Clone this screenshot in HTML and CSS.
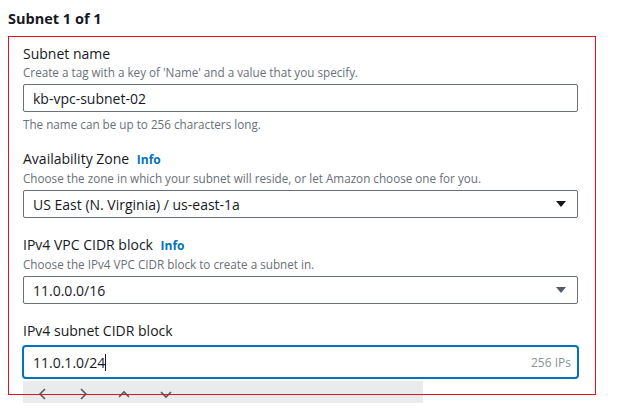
FILE: index.html
```html
<!DOCTYPE html>
<html lang="en">
<head>
<meta charset="utf-8">
<title>Subnet settings</title>
<link rel="stylesheet" href="styles.css">
</head>
<body>
<h2 class="title">Subnet 1 of 1</h2>
<section class="subnet-box">
  <div class="field">
    <div class="label">Subnet name</div>
    <div class="desc">Create a tag with a key of 'Name' and a value that you specify.</div>
    <div class="control input">kb-vpc-subnet-02</div>
    <div class="desc constraint">The name can be up to 256 characters long.</div>
  </div>
  <div class="field">
    <div class="label">Availability Zone <span class="info">Info</span></div>
    <div class="desc">Choose the zone in which your subnet will reside, or let Amazon choose one for you.</div>
    <div class="control select"><span>US East (N. Virginia) / us-east-1a</span><span class="caret"></span></div>
  </div>
  <div class="field">
    <div class="label">IPv4 VPC CIDR block <span class="info">Info</span></div>
    <div class="desc">Choose the IPv4 VPC CIDR block to create a subnet in.</div>
    <div class="control select"><span>11.0.0.0/16</span><span class="caret caret-muted"></span></div>
  </div>
  <div class="field">
    <div class="label">IPv4 subnet CIDR block</div>
    <div class="control input focused"><span>11.0.1.0/24<span class="cursor"></span></span><span class="count">256 IPs</span></div>
  </div>
  <div class="toolbar">
    <svg class="tb-icon" width="10" height="14" viewBox="0 0 10 14"><path d="M7 2 L2 7 L7 12" fill="none" stroke="#545b64" stroke-width="1.6"/></svg>
    <svg class="tb-icon" width="10" height="14" viewBox="0 0 10 14"><path d="M3 2 L8 7 L3 12" fill="none" stroke="#545b64" stroke-width="1.6"/></svg>
    <svg class="tb-icon" width="12" height="14" viewBox="0 0 12 14"><path d="M1 10 L6 5 L11 10" fill="none" stroke="#545b64" stroke-width="1.6"/></svg>
    <svg class="tb-icon" width="12" height="14" viewBox="0 0 12 14"><path d="M1 5 L6 10 L11 5" fill="none" stroke="#545b64" stroke-width="1.6"/></svg>
  </div>
</section>
</body>
</html>
```

FILE: styles.css
```css
html, body {
  margin: 0;
  padding: 0;
  background: #ffffff;
}
body {
  padding: 8px;
  font-family: "Open Sans", "Noto Sans", sans-serif;
  color: #16191f;
}
.title {
  margin: 0;
  font-size: 14.5px;
  line-height: 22px;
  font-weight: 700;
  height: 28px;
}
.subnet-box {
  position: relative;
  width: 555px;
  padding: 7px 17px 15px 14px;
  border: 1px solid transparent;
}
.subnet-box::after {
  content: "";
  position: absolute;
  left: -1px;
  top: -1px;
  right: -1px;
  bottom: -1px;
  border: 1px solid #e8101b;
  pointer-events: none;
  z-index: 2;
}
.field + .field {
  margin-top: 17px;
}
.label {
  font-size: 14px;
  line-height: 20px;
}
.info {
  color: #0073bb;
  font-weight: 700;
  font-size: 12px;
  margin-left: 4px;
}
.desc {
  font-size: 11.7px;
  line-height: 16px;
  color: #687078;
}
.constraint {
  margin-top: 4px;
}
.control {
  box-sizing: border-box;
  margin-top: 4px;
  height: 28px;
  border: 1px solid #687078;
  border-radius: 2px;
  padding: 0 9px;
  display: flex;
  align-items: center;
  justify-content: space-between;
  font-size: 14px;
}
.caret {
  width: 0;
  height: 0;
  border-left: 5px solid transparent;
  border-right: 5px solid transparent;
  border-top: 6px solid #16191f;
  margin-right: 2px;
}
.caret-muted {
  border-top-color: #545b64;
}
.focused {
  height: 34px;
  border: 2px solid #0073bb;
  border-radius: 4px;
  margin-left: -1px;
  margin-right: -1px;
}
.cursor {
  display: inline-block;
  width: 1px;
  height: 17px;
  background: #16191f;
  vertical-align: -3px;
}
.count {
  font-size: 12px;
  color: #879596;
  margin-right: -3px;
}
.toolbar {
  position: absolute;
  left: 14px;
  top: 344px;
  width: 400px;
  height: 25px;
  background: #e9ebed;
  border-radius: 0 0 3px 3px;
  display: flex;
  align-items: center;
  padding-left: 15px;
  box-sizing: border-box;
  z-index: 1;
}
.tb-icon {
  margin-right: 30px;
}
```
